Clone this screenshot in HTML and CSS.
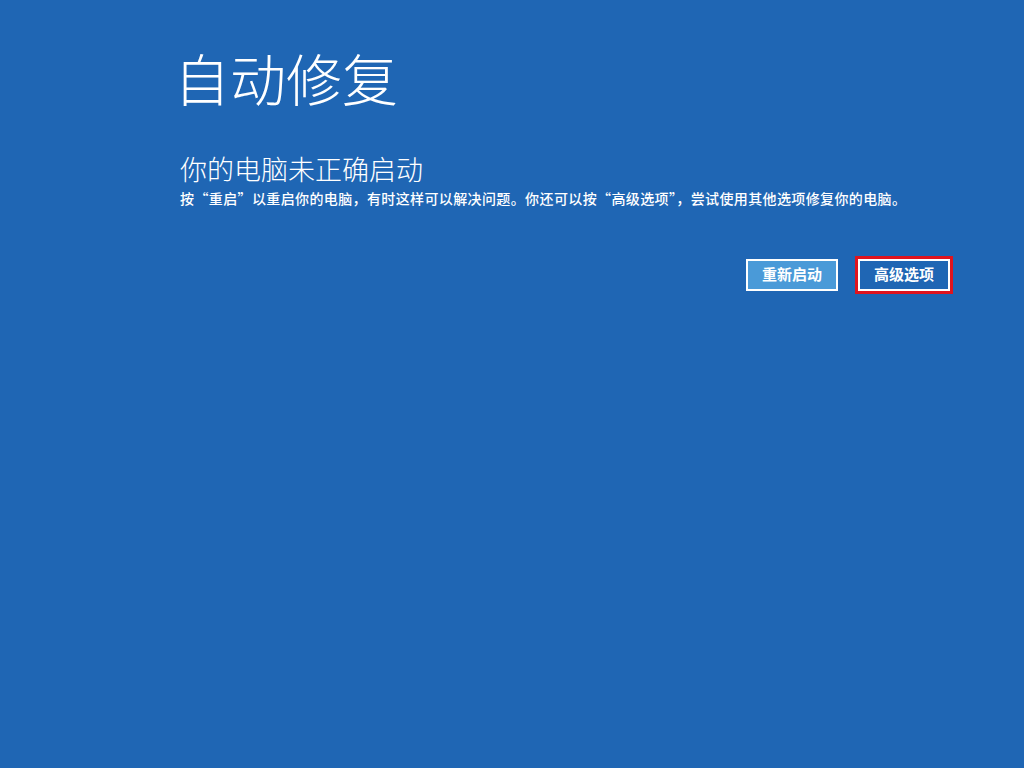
FILE: index.html
```html
<!DOCTYPE html>
<html lang="zh-CN">
<head>
<meta charset="utf-8">
<title>自动修复</title>
<link rel="stylesheet" href="styles.css">
</head>
<body>
<main class="page">
  <h1 class="title">自动修复</h1>
  <h2 class="subtitle">你的电脑未正确启动</h2>
  <p class="desc">按“重启”以重启你的电脑，有时这样可以解决问题。你还可以按“高级选项”，尝试使用其他选项修复你的电脑。</p>
  <div class="actions">
    <button class="btn btn-primary">重新启动</button>
    <button class="btn btn-focus">高级选项</button>
  </div>
</main>
</body>
</html>
```
FILE: styles.css
```css
html, body {
  margin: 0;
  padding: 0;
  height: 100%;
}
body {
  background: #1f66b4;
  color: #ffffff;
  font-family: "Noto Sans CJK SC", "Noto Sans", sans-serif;
  overflow: hidden;
}
.page {
  display: flex;
  flex-direction: column;
  width: 779px;
  margin-left: 174px;
  padding-top: 37px;
}
.title {
  margin: 0;
  font-size: 56px;
  font-weight: 300;
  line-height: 80px;
  letter-spacing: 0;
}
.subtitle {
  margin: 34px 0 0 6px;
  font-size: 27px;
  font-weight: 300;
  line-height: 36px;
}
.desc {
  margin: 1px 0 0 6px;
  font-size: 14px;
  font-weight: 500;
  line-height: 20px;
  letter-spacing: 0.38px;
}
.actions {
  display: flex;
  justify-content: flex-end;
  gap: 20px;
  margin-top: 51px;
}
.btn {
  box-sizing: border-box;
  width: 92px;
  height: 32px;
  font-family: "Noto Sans CJK SC", sans-serif;
  font-size: 15px;
  font-weight: 700;
  color: #ffffff;
  border: 2px solid #ffffff;
  padding: 0 0 2px;
  line-height: 26px;
}
.btn-primary {
  background: #4a9ad8;
}
.btn-focus {
  background: #1f66b4;
  outline: 3px solid #e0141e;
  outline-offset: 0;
  margin-right: 3px;
}
```
